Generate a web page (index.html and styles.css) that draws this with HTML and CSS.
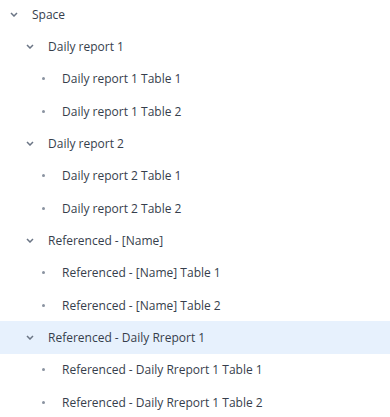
FILE: index.html
```html
<!DOCTYPE html>
<html lang="en">
<head>
    <meta charset="UTF-8">
    <meta name="viewport" content="width=device-width, initial-scale=1.0">
    <title>Tree</title>
    <link rel="stylesheet" href="styles.css">
</head>
<body>
    <ul class="tree">
        <li class="node level-0">
            <span class="toggle"><svg width="8" height="5" viewBox="0 0 8 5"><path d="M1 1l3 3 3-3" /></svg></span>
            <span class="label">Space</span>
        </li>
        <li class="node level-1">
            <span class="toggle"><svg width="8" height="5" viewBox="0 0 8 5"><path d="M1 1l3 3 3-3" /></svg></span>
            <span class="label">Daily report 1</span>
        </li>
        <li class="node level-2">
            <span class="dot"></span>
            <span class="label">Daily report 1 Table 1</span>
        </li>
        <li class="node level-2">
            <span class="dot"></span>
            <span class="label">Daily report 1 Table 2</span>
        </li>
        <li class="node level-1">
            <span class="toggle"><svg width="8" height="5" viewBox="0 0 8 5"><path d="M1 1l3 3 3-3" /></svg></span>
            <span class="label">Daily report 2</span>
        </li>
        <li class="node level-2">
            <span class="dot"></span>
            <span class="label">Daily report 2 Table 1</span>
        </li>
        <li class="node level-2">
            <span class="dot"></span>
            <span class="label">Daily report 2 Table 2</span>
        </li>
        <li class="node level-1">
            <span class="toggle"><svg width="8" height="5" viewBox="0 0 8 5"><path d="M1 1l3 3 3-3" /></svg></span>
            <span class="label">Referenced - [Name]</span>
        </li>
        <li class="node level-2">
            <span class="dot"></span>
            <span class="label">Referenced - [Name] Table 1</span>
        </li>
        <li class="node level-2">
            <span class="dot"></span>
            <span class="label">Referenced - [Name] Table 2</span>
        </li>
        <li class="node level-1 selected">
            <span class="toggle"><svg width="8" height="5" viewBox="0 0 8 5"><path d="M1 1l3 3 3-3" /></svg></span>
            <span class="label">Referenced - Daily Rreport 1</span>
        </li>
        <li class="node level-2">
            <span class="dot"></span>
            <span class="label">Referenced - Daily Rreport 1 Table 1</span>
        </li>
        <li class="node level-2">
            <span class="dot"></span>
            <span class="label">Referenced - Daily Rreport 1 Table 2</span>
        </li>
    </ul>
</body>
</html>
```

FILE: styles.css
```css
body {
    margin: 0;
    font-family: 'Open Sans', 'Noto Sans', sans-serif;
    font-size: 12px;
    color: #363e4c;
    background: #fff;
    overflow: hidden;
}

.tree {
    list-style: none;
    margin: -2px 0 0 0;
    padding: 0;
}

.node {
    display: flex;
    align-items: center;
    height: 32.33px;
    white-space: nowrap;
}

.node.selected {
    background: #e7f1fd;
}

.level-0 { padding-left: 10px; }
.level-1 { padding-left: 26px; }
.level-2 { padding-left: 41px; }

.toggle {
    display: flex;
    align-items: center;
    justify-content: center;
    width: 8px;
    margin-right: 14px;
}

.toggle svg {
    fill: none;
    stroke: #6b7585;
    stroke-width: 1.5;
}

.dot {
    width: 3px;
    height: 3px;
    border-radius: 50%;
    background: #8a93a0;
    margin: 0 17px 0 1px;
}
```
